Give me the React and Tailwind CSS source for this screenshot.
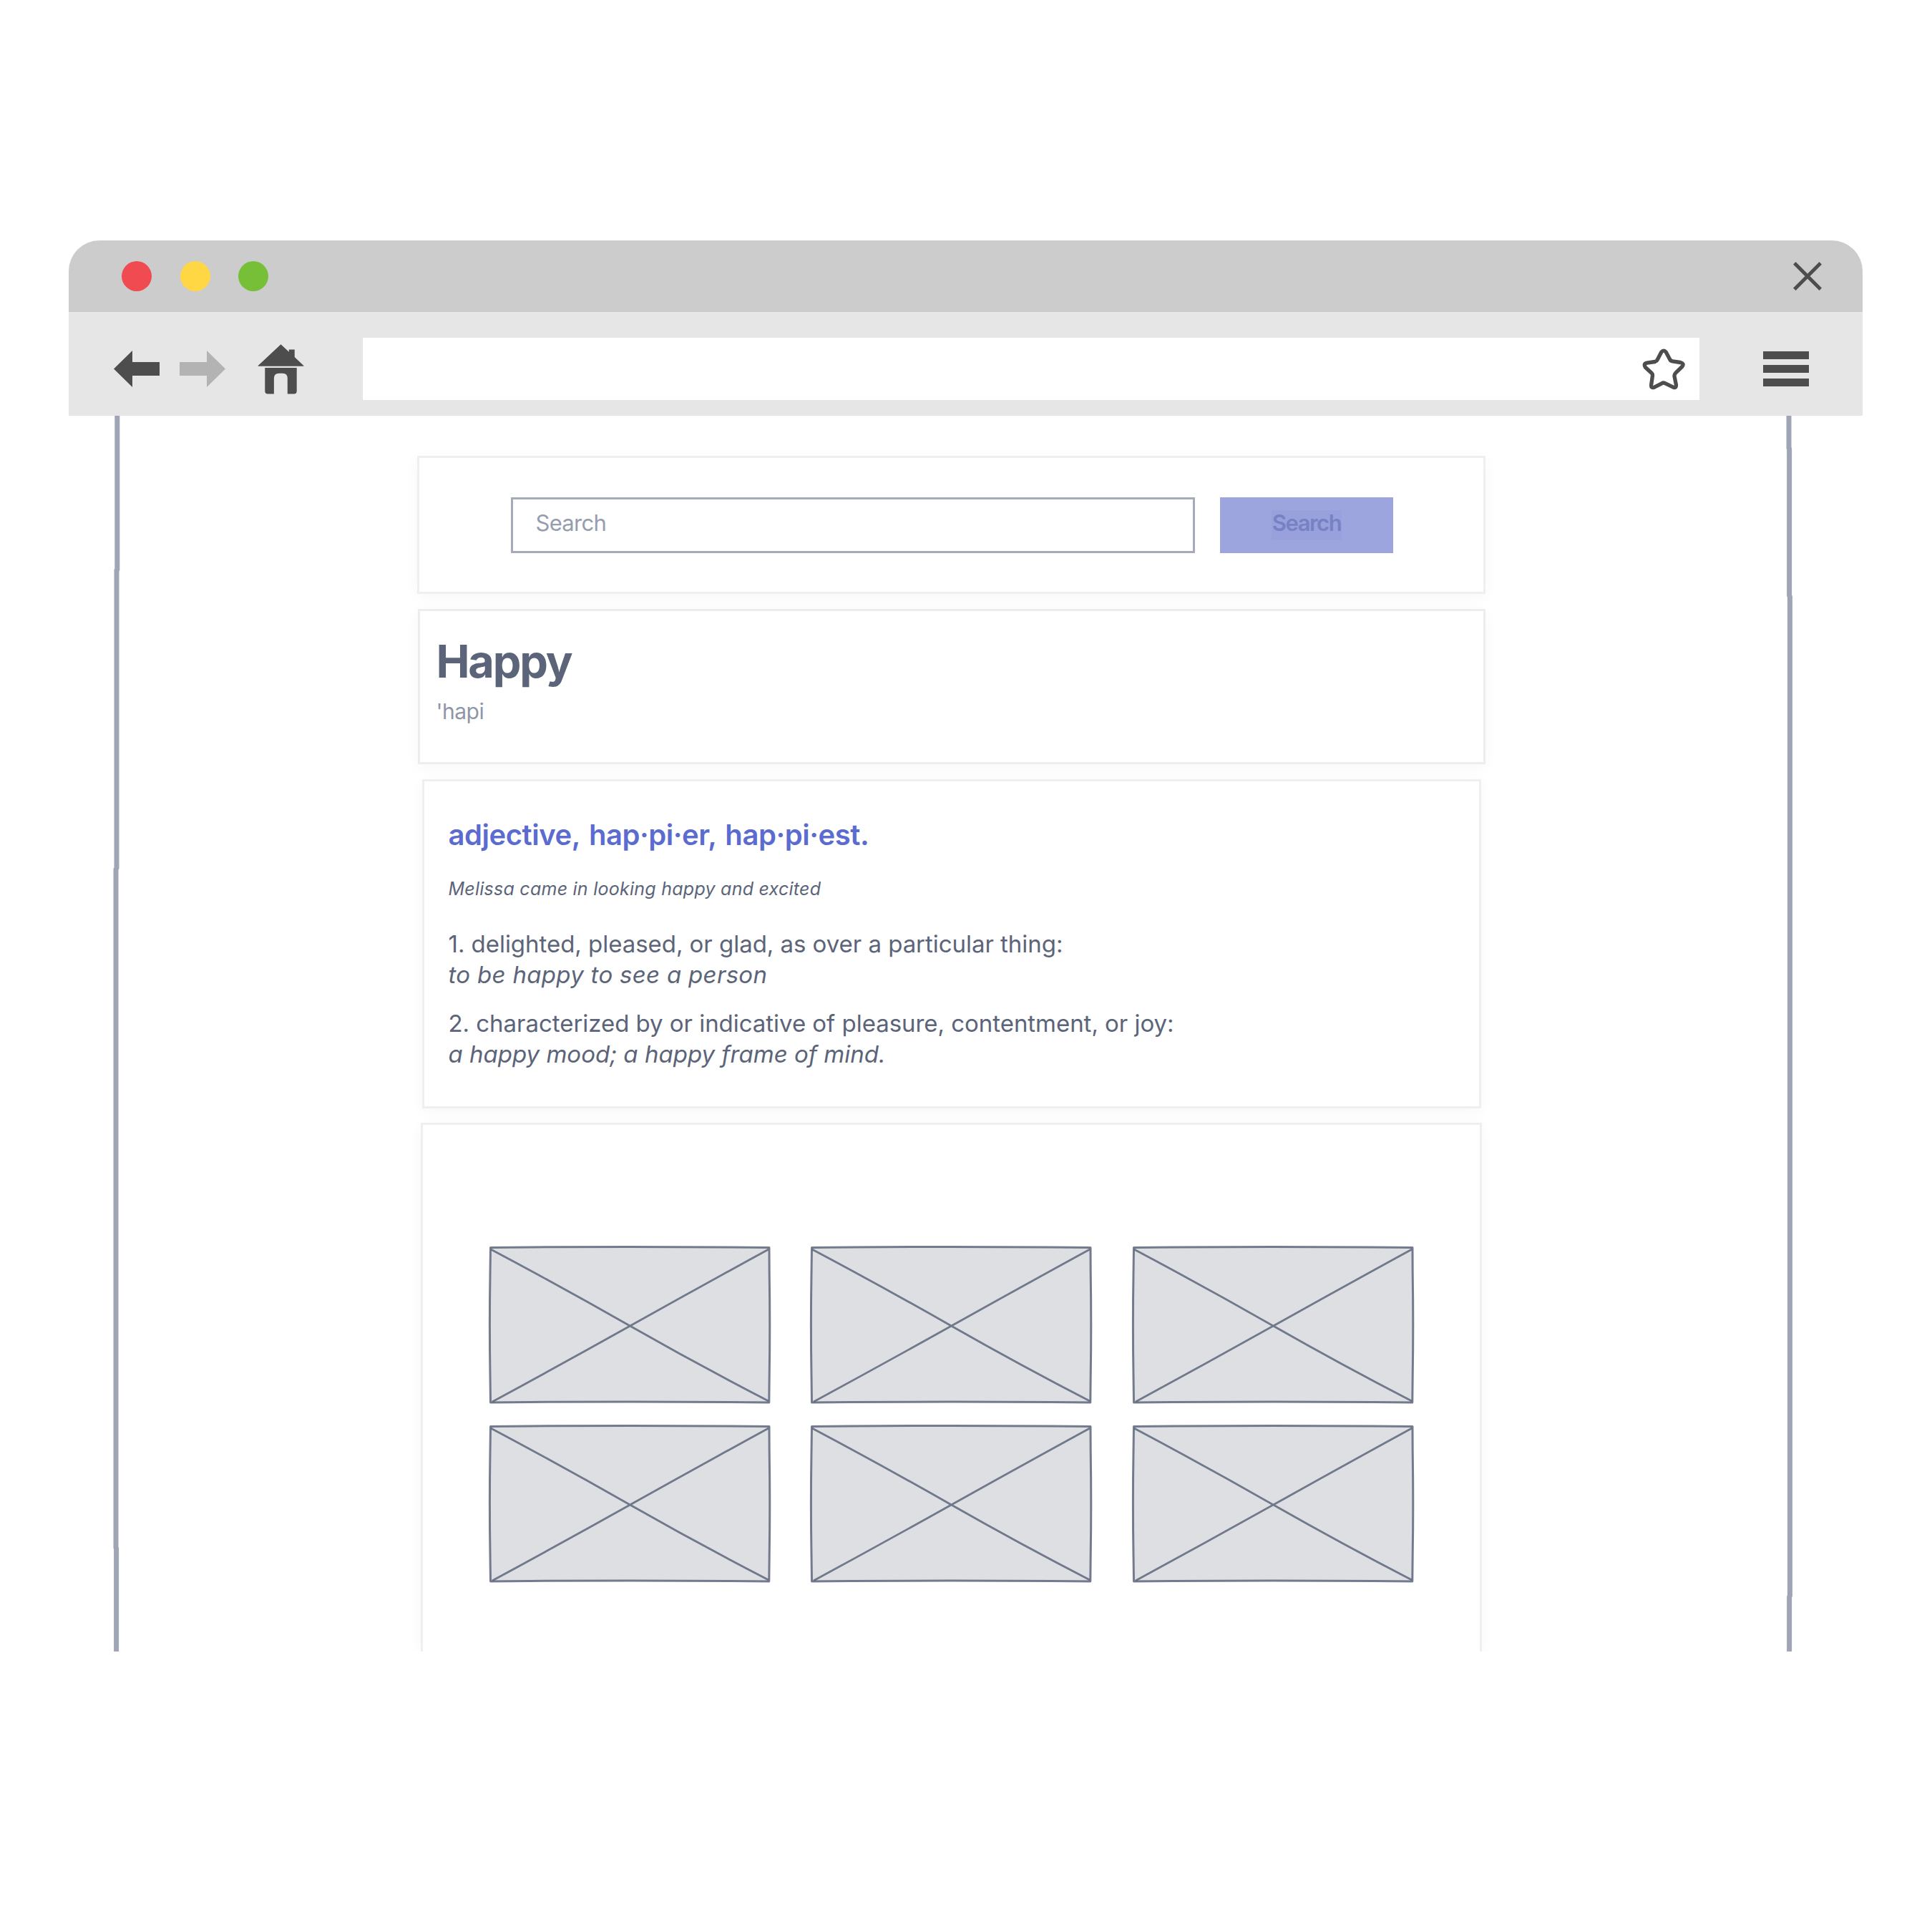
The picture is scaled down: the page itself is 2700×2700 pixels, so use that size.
import React from "react";

function TitleBar() {
  return (
    <div className="flex h-[100px] items-center bg-[#cccccc] pl-[74px] pr-[57px]">
      <div className="flex gap-[39.5px]">
        <span className="size-[42px] rounded-full bg-[#f04b50]" />
        <span className="size-[42px] rounded-full bg-[#ffd644]" />
        <span className="size-[42px] rounded-full bg-[#76bf37]" />
      </div>
      <svg className="ml-auto size-[40px]" viewBox="0 0 40 40" stroke="#4d4d4d" strokeWidth="5">
        <path d="M1.8 1.8 L38.2 38.2 M38.2 1.8 L1.8 38.2" />
      </svg>
    </div>
  );
}

function Toolbar() {
  return (
    <div className="flex h-[145px] items-center bg-[#e6e6e6] pl-[63px] pt-[14px]">
      <svg className="h-[51px] w-[64px]" viewBox="0 0 64 51" fill="#4d4d4d">
        <path d="M0 25.5 L26 0 V16 H64 V35 H26 V51 Z" />
      </svg>
      <svg className="ml-[28px] h-[51px] w-[64px]" viewBox="0 0 64 51" fill="#b3b3b3">
        <path d="M64 25.5 L38 0 V16 H0 V35 H38 V51 Z" />
      </svg>
      <svg className="ml-[45px] h-[72px] w-[65px]" viewBox="840 480 196 216" fill="#4d4d4d">
        <path d="M938 483 L972 515 V505 H996 V537 L1034 573 V575 H842 V573 Z" />
        <path d="M871 582 H1005 V680 Q1005 692 993 692 H966 V627 Q966 605 946 605 H930 Q909 605 909 627 V692 H883 Q871 692 871 680 Z" />
      </svg>
      <div className="ml-[82px] flex h-[87px] w-[1868px] items-center justify-end bg-white pr-[18px]">
        <svg
          className="h-[62px] w-[64px]"
          viewBox="100 495 192 185"
          fill="none"
          stroke="#4d4d4d"
          strokeWidth="16"
          strokeLinejoin="round"
        >
          <path d="M186 516 Q196 504 206 516 L222 546 Q225 553 233 554 L266 559 Q284 564 273 577 L247 602 Q240 609 241 617 L248 652 Q250 668 236 663 L205 648 Q196 642 188 647 L157 663 Q142 668 144 653 L149 617 Q151 609 145 603 L119 579 Q110 564 126 561 L160 556 Q167 554 170 547 Z" />
        </svg>
      </div>
      <div className="ml-[89px] flex w-[64px] flex-col gap-[8px]">
        <span className="h-[11px] bg-[#4d4d4d]" />
        <span className="h-[11px] bg-[#4d4d4d]" />
        <span className="h-[11px] bg-[#4d4d4d]" />
      </div>
    </div>
  );
}

function ImagePlaceholder() {
  return (
    <svg
      className="h-[217px] w-[390px] overflow-visible"
      viewBox="0 0 390 217"
      stroke="#5d667b"
      strokeOpacity="0.85"
      strokeWidth="3"
      strokeLinejoin="round"
    >
      <path
        fill="#dedfe3"
        d="M0.5 0.4 L55 0 Q195 -1 335 0 L390 0.4 L390.2 35 Q391.4 108 390.2 182 L389.8 217 L335 216.4 Q195 215.8 55 216.4 L0.5 217 L0 180 Q-1.2 108 0 36 Z"
      />
      <path fill="none" strokeWidth="2.8" d="M1 3 Q99 55 195.5 110 T389 215 M389 3 Q292 56 195.5 110 T3 216" />
    </svg>
  );
}

function Definition({ text, example, tracking }) {
  return (
    <div className="text-[33px] leading-[43px]">
      <p className="tracking-[-0.04px]">{text}</p>
      <p className={`italic [font-feature-settings:'cv11'] ${tracking}`}>{example}</p>
    </div>
  );
}

const cardShadow = "shadow-[0_4px_20px_rgba(0,0,0,0.035)]";

export default function App() {
  return (
    <div className="h-[2700px] w-[2700px] overflow-hidden bg-white pt-[336px] font-['Inter',sans-serif] text-[#5b6478]">
      <div className="ml-[96px] h-[1972px] w-[2507px] overflow-hidden rounded-t-[43px]">
        <TitleBar />
        <Toolbar />
        <div className="flex h-[1727px]">
          <svg className="ml-[56px] h-[1727px] w-[20px] shrink-0" viewBox="0 0 20 1727" fill="none" stroke="#9fa5b4" strokeWidth="7">
            <path d="M11.8 0 V215 L11 216 V632 L10 634 V1582 L10.6 1583 V1727" />
          </svg>

          <main className="ml-[411px] flex w-[1493px] shrink-0 flex-col items-center whitespace-nowrap pt-[56px]">
            <section className={`flex h-[193px] w-[1493px] shrink-0 border-[3px] border-[#efefef] bg-white pl-[127.5px] pt-[55px] ${cardShadow}`}>
              <div className="flex h-[78px] w-[956px] items-center border-[3px] border-[#a5abb9] pb-[6px] pl-[32px] text-[31px] tracking-[-0.7px] text-[#969dae]">
                Search
              </div>
              <div className="ml-[35.5px] flex h-[78px] w-[242px] justify-center bg-[#9ca5de] pt-[18px]">
                <span className="h-[42px] bg-[#98a1db] px-px text-[31px] font-semibold leading-[36px] tracking-[-1.5px] text-[#7682c4]">
                  Search
                </span>
              </div>
            </section>

            <section className={`mt-[21px] h-[217px] w-[1492px] shrink-0 border-[3px] border-[#ededed] bg-white pl-[23px] pt-[32px] ${cardShadow}`}>
              <h1 className="text-[63px] font-bold leading-[77px] tracking-[-2.2px]">Happy</h1>
              <p className="mt-[11px] text-[30px] leading-[40px] tracking-[-0.5px] text-[#8f96a8]">'hapi</p>
            </section>

            <section className={`mt-[21px] h-[460px] w-[1480px] shrink-0 border-[3px] border-[#efefef] bg-white pl-[34px] pt-[51px] ${cardShadow}`}>
              <h2 className="text-[40px] font-semibold leading-[48px] tracking-[-0.45px] [word-spacing:3px] text-[#5c6bcf]">
                adjective, hap·pi·er, hap·pi·est.
              </h2>
              <p className="mt-[35px] text-[25px] italic leading-[32px] tracking-[0.25px] [font-feature-settings:'cv11']">
                Melissa came in looking happy and excited
              </p>
              <div className="mt-[40px] flex flex-col gap-[25px]">
                <Definition
                  text="1. delighted, pleased, or glad, as over a particular thing:"
                  example="to be happy to see a person"
                  tracking="tracking-[0.3px]"
                />
                <Definition
                  text="2. characterized by or indicative of pleasure, contentment, or joy:"
                  example="a happy mood; a happy frame of mind."
                  tracking="tracking-[0px]"
                />
              </div>
            </section>

            <section className={`mt-[20px] h-[739px] w-[1483px] shrink-0 border-[3px] border-b-0 border-[#efefef] bg-white pl-[93.5px] pt-[170.5px] ${cardShadow}`}>
              <div className="grid grid-cols-[repeat(3,390px)] gap-x-[59.5px] gap-y-[33px]">
                {[0, 1, 2, 3, 4, 5].map((n) => (
                  <ImagePlaceholder key={n} />
                ))}
              </div>
            </section>
          </main>

          <svg className="ml-[414px] h-[1727px] w-[20px] shrink-0" viewBox="0 0 20 1727" fill="none" stroke="#9fa5b4" strokeWidth="7">
            <path d="M10 0 V45 L10.6 46 V251 L11.4 253 V1649 L10.6 1651 V1727" />
          </svg>
        </div>
      </div>
    </div>
  );
}
